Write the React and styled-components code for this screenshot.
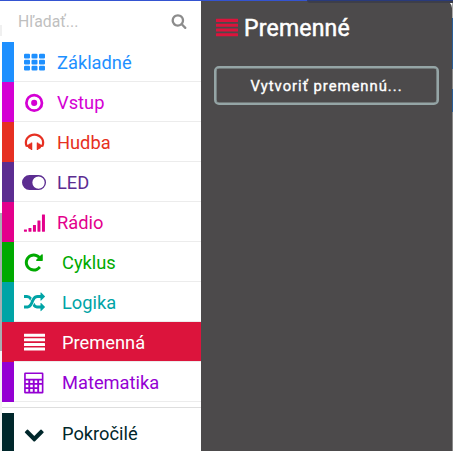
import React from "react";
import styled, { createGlobalStyle } from "styled-components";

const GlobalStyle = createGlobalStyle`
  *, *::before, *::after { box-sizing: border-box; }
  body { margin: 0; overflow: hidden; background: #fff; font-family: Roboto, sans-serif; }
`;

const Editor = styled.div`
  position: relative;
  display: flex;
  width: 453px;
  height: 451px;
  overflow: hidden;
  background: linear-gradient(#3454d1 0 1px, #fff 1px);
`;

const Gutter = styled.div`
  flex: 0 0 2px;
  margin-top: 1px;
  background: linear-gradient(#fff 0 24px, #f0f0f0 24px 35px, #fff 35px 212px, #a9adb2 212px 350px, #f4f4f4 350px);
`;

const Toolbox = styled.aside`
  flex: 0 0 199px;
  display: flex;
  flex-direction: column;
  margin-top: 1px;
  background: #fff;
`;

const Search = styled.div`
  flex: 0 0 41px;
  display: flex;
  align-items: center;
  justify-content: space-between;
  padding: 0 14px 0 16px;
  font-size: 15.8px;
  color: #bfbfbf;
`;

const Row = styled.div`
  flex: 0 0 40px;
  display: flex;
  align-items: center;
  border-left: 12px solid ${(p) => p.$color};
  background: ${(p) => (p.$selected ? p.$color : "#fff")};
  color: ${(p) => (p.$selected ? "#fff" : p.$color)};
  box-shadow: inset 0 -1px 0 ${(p) => (p.$last ? "#fff" : "#ececec")};
`;

const IconSlot = styled.span`
  flex: 0 0 41px;
  display: flex;
  justify-content: center;
`;

const Label = styled.span`
  font-size: 18.3px;
  line-height: 38px;
  padding-top: 2px;
  padding-left: ${(p) => (p.$indent ? 7 : 2)}px;
  white-space: nowrap;
`;

const Divider = styled.hr`
  flex: 0 0 1px;
  width: 100%;
  margin: 5px 0;
  border: 0;
  background: #dedede;
`;

const Glyph = styled.svg`
  display: block;
  flex: none;
  width: ${(p) => p.$size || 21}px;
  height: ${(p) => p.$size || 21}px;
  fill: currentColor;
  overflow: visible;
`;

const Flyout = styled.section`
  flex: 1;
  margin: 1px 1px 0 0;
  padding: 10px 13px;
  border-top-right-radius: 7px;
  background: #4c4a4b;
  color: #fff;
`;

const Backdrop = styled.div`
  position: absolute;
  top: 0;
  right: 0;
  width: 146px;
  height: 3px;
  border-bottom-left-radius: 6px;
  background: linear-gradient(#293a7a 0 1px, #3d3e49 1px);
`;

const Edge = styled.div`
  position: absolute;
  top: 3px;
  right: 0;
  bottom: 0;
  width: 1px;
  background: linear-gradient(#aaa 0 15px, #2b5f98 15px 66px, #8a8a8a 66px 86px, #2b5f98 86px 109px, #888 109px);
`;

const Heading = styled.h1`
  display: flex;
  align-items: center;
  gap: 6px;
  height: 34px;
  margin: 0 0 0 2px;
  font-size: 23px;
  font-weight: 400;
  letter-spacing: 0.2px;
  -webkit-text-stroke: 0.5px currentColor;
  svg { color: #dc143c; }
`;

const CreateButton = styled.button`
  display: block;
  width: 225px;
  height: 39px;
  margin: 21px 0 0;
  padding: 0;
  border: 2px solid #95a5a6;
  border-radius: 5px;
  box-shadow: inset 0 0 0 0.6px #95a5a6;
  background: transparent;
  color: #fff;
  font: 400 14.8px Roboto, sans-serif;
  letter-spacing: 1px;
  -webkit-text-stroke: 0.35px currentColor;
`;

const icons = {
  grid: [0, 640, 1280].flatMap((x) =>
    [156, 668, 1180].map((y) => <rect key={`${x}-${y}`} x={x} y={y} width="512" height="400" rx="96" />)
  ),
  target: (
    <g>
      <circle cx="868" cy="930" r="664" fill="none" stroke="currentColor" strokeWidth="232" />
      <circle cx="868" cy="930" r="260" />
    </g>
  ),
  headphones: (
    <path d="M1728 886q0 166-60 314l-20 49-185 33q-22 83-90.500 136.500t-156.500 53.500v32q0 14-9 23t-23 9h-64q-14 0-23-9t-9-23v-576q0-14 9-23t23-9h64q14 0 23 9t9 23v32q71 0 130 35.500t93 95.500l68-12q29-95 29-193 0-148-88-279t-236.500-209-315.500-78-315.500 78-236.500 209-88 279q0 98 29 193l68 12q34-60 93-95.500t130-35.500v-32q0-14 9-23t23-9h64q14 0 23 9t9 23v576q0 14-9 23t-23 9h-64q-14 0-23-9t-9-23v-32q-88 0-156.500-53.500t-90.500-136.500l-185-33-20-49q-60-148-60-314 0-151 67-291t179-242.500 266-163.500 320-61 320 61 266 163.500 179 242.500 67 291z" />
  ),
  toggle: (
    <path fillRule="evenodd" d="M470 260h768a640 640 0 0 1 0 1280h-768a640 640 0 0 1 0-1280zM1238 375a525 525 0 1 0 0 1050a525 525 0 1 0 0-1050z" />
  ),
  signal: [192, 320, 576, 960, 1472].map((h, i) => (
    <rect key={h} x={i * 384 - 4} y={1680 - h} width="256" height={h} rx="30" />
  )),
  repeat: (
    <path transform="translate(-60 0)" d="M1664 256v448q0 26-19 45t-45 19h-448q-42 0-59-40-17-39 14-69l138-138q-148-137-349-137-104 0-198.500 40.500t-163.500 109.500-109.500 163.500-40.500 198.500 40.500 198.500 109.500 163.500 163.500 109.500 198.500 40.500q119 0 225-52t179-147q7-10 23-12 15 0 25 9l137 138q9 8 9.500 20.500t-7.500 22.500q-109 132-264 204.500t-327 72.500q-156 0-298-61t-245-164-164-245-61-298 61-298 164-245 245-164 298-61q147 0 284.500 55.500t244.500 156.500l130-129q29-31 70-14 39 17 39 59z" />
  ),
  shuffle: (
    <path d="M666 481q-60 92-137 273-22-45-37-72.500t-40.500-63.500-51-56.500-63-35-81.500-14.500h-224q-14 0-23-9t-9-23v-192q0-14 9-23t23-9h224q250 0 410 225zm1126 799q0 14-9 23l-320 320q-9 9-23 9-13 0-22.500-9.500t-9.500-22.500v-192q-32 0-85 .5t-81 1-73-1-71-5-64-10.500-63-18.500-58-28.500-59-40-55-53.500-56-69.500q59-93 136-273 22 45 37 72.500t40.500 63.500 51 56.500 63 35 81.500 14.500h256v-192q0-14 9-23t23-9q12 0 24 10l319 319q9 9 9 23zm0-896q0 14-9 23l-320 320q-9 9-23 9-13 0-22.500-9.500t-9.500-22.500v-192h-256q-48 0-87 15t-69 45-51 61.500-45 77.500q-32 62-78 171-29 66-49.500 111t-54 105-64 100-74 83-90 68.500-106.500 42-128 16.500h-224q-14 0-23-9t-9-23v-192q0-14 9-23t23-9h224q48 0 87-15t69-45 51-61.500 45-77.500q32-62 78-171 29-66 49.500-111t54-105 64-100 74-83 90-68.500 106.500-42 128-16.500h256v-192q0-14 9-23t23-9q12 0 24 10l319 319q9 9 9 23z" />
  ),
  lines: [150, 540, 930, 1320].map((y) => <rect key={y} x="0" y={y} width="1792" height="256" rx="20" />),
  calculator: (
    <path transform="translate(-60 40)" fillRule="evenodd" d="M170 0h1450q100 0 100 100v1600q0 92-100 92H170q-100 0-100-92V100Q70 0 170 0zM210 130v410h1370V130zM210 690v210h220V690zM590 690v210h220V690zM970 690v210h220V690zM1350 690v210h230V690zM210 1050v210h220v-210zM590 1050v210h220v-210zM970 1050v210h220v-210zM210 1410v230h220v-230zM590 1410v230h220v-230zM970 1410v230h220v-230zM1350 1050v590h230v-590z" />
  ),
  chevron: (
    <path transform="translate(-20 20)" d="M1683 808l-742 741q-19 19-45 19t-45-19l-742-741q-19-19-19-45.500t19-45.500l166-165q19-19 45-19t45 19l531 531 531-531q19-19 45-19t45 19l166 165q19 19 19 45.500t-19 45.500z" />
  ),
  search: (
    <path d="M1216 832q0-185-131.500-316.500t-316.500-131.500-316.500 131.500-131.500 316.500 131.500 316.500 316.500 131.500 316.500-131.500 131.500-316.500zm512 832q0 52-38 90t-90 38q-54 0-90-38l-343-342q-179 124-399 124-143 0-273.500-55.500t-225-150-150-225-55.500-273.500 55.500-273.500 150-225 225-150 273.500-55.500 273.500 55.500 225 150 150 225 55.500 273.500q0 220-124 399l343 343q37 37 37 90z" />
  ),
};

const SearchIcon = styled(Glyph)`
  position: relative;
  top: -1px;
  color: #8c8c8c;
`;

const Icon = ({ name, size }) => (
  <Glyph $size={size} viewBox="0 0 1792 1792" aria-hidden="true">
    {icons[name]}
  </Glyph>
);

const categories = [
  { label: "Základné", icon: "grid", color: "#1e90ff" },
  { label: "Vstup", icon: "target", color: "#d400d4" },
  { label: "Hudba", icon: "headphones", color: "#e63022" },
  { label: "LED", icon: "toggle", color: "#5c2d91" },
  { label: "Rádio", icon: "signal", color: "#e3008c" },
  { label: "Cyklus", icon: "repeat", color: "#00aa00", indent: true },
  { label: "Logika", icon: "shuffle", color: "#00a4a6", indent: true },
  { label: "Premenná", icon: "lines", color: "#dc143c", indent: true, selected: true },
  { label: "Matematika", icon: "calculator", color: "#9400d3", indent: true },
];

const Category = ({ label, icon, color, indent, selected, last }) => (
  <Row $color={color} $selected={selected} $last={last}>
    <IconSlot>
      <Icon name={icon} />
    </IconSlot>
    <Label $indent={indent}>{label}</Label>
  </Row>
);

export default function App() {
  return (
    <>
      <GlobalStyle />
      <Editor>
        <Backdrop />
        <Gutter />
        <Toolbox>
          <Search>
            Hľadať...
            <SearchIcon $size={16} viewBox="0 0 1792 1792" aria-hidden="true">
              {icons.search}
            </SearchIcon>
          </Search>
          {categories.map((c) => (
            <Category key={c.label} {...c} />
          ))}
          <Divider />
          <Category label="Pokročilé" icon="chevron" color="#00272b" indent last />
        </Toolbox>
        <Flyout>
          <Heading>
            <Icon name="lines" size={22} />
            Premenné
          </Heading>
          <CreateButton>Vytvoriť premennú...</CreateButton>
        </Flyout>
        <Edge />
      </Editor>
    </>
  );
}
